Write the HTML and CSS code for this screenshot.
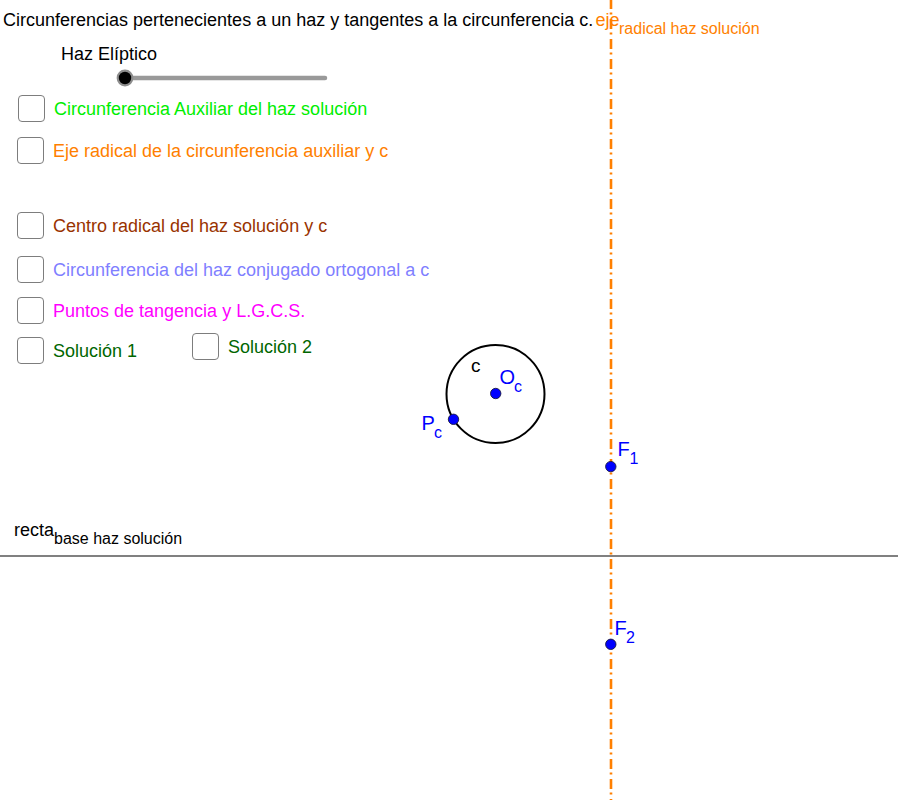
FILE: index.html
```html
<!DOCTYPE html>
<html lang="es">
<head>
<meta charset="utf-8">
<title>Haz Elíptico</title>
<link rel="stylesheet" href="styles.css">
</head>
<body>
<svg class="canvas" width="900" height="800" viewBox="0 0 900 800" xmlns="http://www.w3.org/2000/svg">
  <line x1="0" y1="556" x2="898" y2="556" class="base-line"/>
  <line x1="611" y1="0" x2="611" y2="800" class="radical-axis"/>
  <circle cx="495.5" cy="394" r="49" class="circ"/>
  <text x="595.5" y="25.5" class="lbl-orange">eje<tspan x="619" y="34" class="sub16">radical haz solución</tspan></text>
  <text x="14" y="536" class="lbl-black">recta<tspan x="54" y="544" class="sub16">base haz solución</tspan></text>
  <text x="471" y="371.5" class="lbl-black lbl-c">c</text>
  <text x="499.5" y="384" class="lbl-blue">O<tspan x="514" y="392" class="subpt">c</tspan></text>
  <text x="421.5" y="429.5" class="lbl-blue">P<tspan x="434" y="437.5" class="subpt">c</tspan></text>
  <text x="617.5" y="456" class="lbl-blue">F<tspan x="629.5" y="464" class="subpt">1</tspan></text>
  <text x="614.5" y="635" class="lbl-blue">F<tspan x="626" y="643" class="subpt">2</tspan></text>
  <circle cx="495.7" cy="393.5" r="5.2" class="pt"/>
  <circle cx="453.5" cy="419.3" r="5.2" class="pt"/>
  <circle cx="610.8" cy="466.6" r="5.2" class="pt"/>
  <circle cx="610.8" cy="644.3" r="5.2" class="pt"/>
</svg>

<div class="panel">
  <p class="title">Circunferencias pertenecientes a un haz y tangentes a la circunferencia c.</p>
  <div class="slider-group">
    <div class="slider-label">Haz Elíptico</div>
    <svg class="slider" width="216" height="18" viewBox="0 0 216 18" xmlns="http://www.w3.org/2000/svg">
      <line x1="9" y1="9" x2="209" y2="9" class="track"/>
      <circle cx="9" cy="9" r="8.4" class="knob-halo"/>
      <circle cx="9" cy="9" r="6.2" class="knob"/>
    </svg>
  </div>
  <div class="options">
    <label class="opt opt-first"><span class="box"></span><span class="txt c-green">Circunferencia Auxiliar del haz solución</span></label>
    <label class="opt opt-s15"><span class="box"></span><span class="txt c-orange">Eje radical de la circunferencia auxiliar y c</span></label>
    <label class="opt opt-s48"><span class="box"></span><span class="txt c-brown">Centro radical del haz solución y c</span></label>
    <label class="opt opt-s17"><span class="box"></span><span class="txt c-lav">Circunferencia del haz conjugado ortogonal a c</span></label>
    <label class="opt opt-s14"><span class="box"></span><span class="txt c-mag">Puntos de tangencia y L.G.C.S.</span></label>
    <div class="opt-row">
      <label class="opt opt-sol1"><span class="box"></span><span class="txt c-dgreen">Solución 1</span></label>
      <label class="opt"><span class="box"></span><span class="txt c-dgreen">Solución 2</span></label>
    </div>
  </div>
</div>
</body>
</html>
```

FILE: styles.css
```css
html, body {
  margin: 0;
  padding: 0;
  background: #ffffff;
}

body {
  width: 900px;
  height: 800px;
  overflow: hidden;
  font-family: "Liberation Sans", Arial, sans-serif;
  font-size: 18px;
  color: #000;
}

.canvas {
  position: absolute;
  top: 0;
  left: 0;
}

.base-line {
  stroke: #808080;
  stroke-width: 2;
}

.radical-axis {
  stroke: #ff7f00;
  stroke-width: 2.6;
  stroke-dasharray: 10 3.5 2 4.5;
  stroke-dashoffset: 1;
}

.circ {
  fill: none;
  stroke: #000;
  stroke-width: 2;
}

.pt {
  fill: #0000ff;
  stroke: #1a1a40;
  stroke-width: 0.9;
}

.canvas text {
  font-family: "Liberation Sans", Arial, sans-serif;
  font-size: 18px;
}

.lbl-orange { fill: #ff7f00; }
.lbl-black { fill: #000; }
.lbl-blue { fill: #0000ff; }

.canvas .lbl-blue { font-size: 20px; }
.canvas .lbl-c { font-size: 19px; }
.canvas .sub16 { font-size: 16px; }
.canvas .subpt { font-size: 16px; }

.panel {
  position: relative;
}

.title {
  margin: 0;
  padding: 9px 0 0 3px;
  line-height: 22px;
  white-space: nowrap;
}

.slider-group {
  display: flex;
  flex-direction: column;
}

.slider-label {
  margin: 12px 0 0 61px;
  line-height: 22px;
}

.slider {
  display: block;
  margin: 4px 0 0 116px;
}

.track {
  stroke: #999999;
  stroke-width: 4.5;
  stroke-linecap: round;
}

.knob-halo {
  fill: #8c8c8c;
}

.knob {
  fill: #000;
}

.options {
  display: flex;
  flex-direction: column;
  align-items: flex-start;
  margin-top: 8px;
  padding-left: 17px;
}

.opt {
  display: flex;
  align-items: center;
  height: 27px;
  line-height: 27px;
  white-space: nowrap;
}

.box {
  width: 27px;
  height: 27px;
  box-sizing: border-box;
  border: 1.6px solid #7d7d7d;
  border-radius: 4px;
  background: #fff;
  flex: none;
}

.txt {
  margin-left: 9px;
  padding-top: 1px;
}

.opt-first { margin-left: 1px; }
.opt-s15 { margin-top: 15px; }
.opt-s48 { margin-top: 48px; }
.opt-s17 { margin-top: 17px; }
.opt-s14 { margin-top: 14px; }

.opt-row {
  display: flex;
  align-items: flex-start;
  margin-top: 9px;
}

.opt-sol1 {
  width: 175px;
  margin-top: 4px;
}

.c-green { color: #00ee00; }
.c-orange { color: #ff7f00; }
.c-brown { color: #993300; }
.c-lav { color: #7f7fff; }
.c-mag { color: #ff00ff; }
.c-dgreen { color: #006600; }
```
